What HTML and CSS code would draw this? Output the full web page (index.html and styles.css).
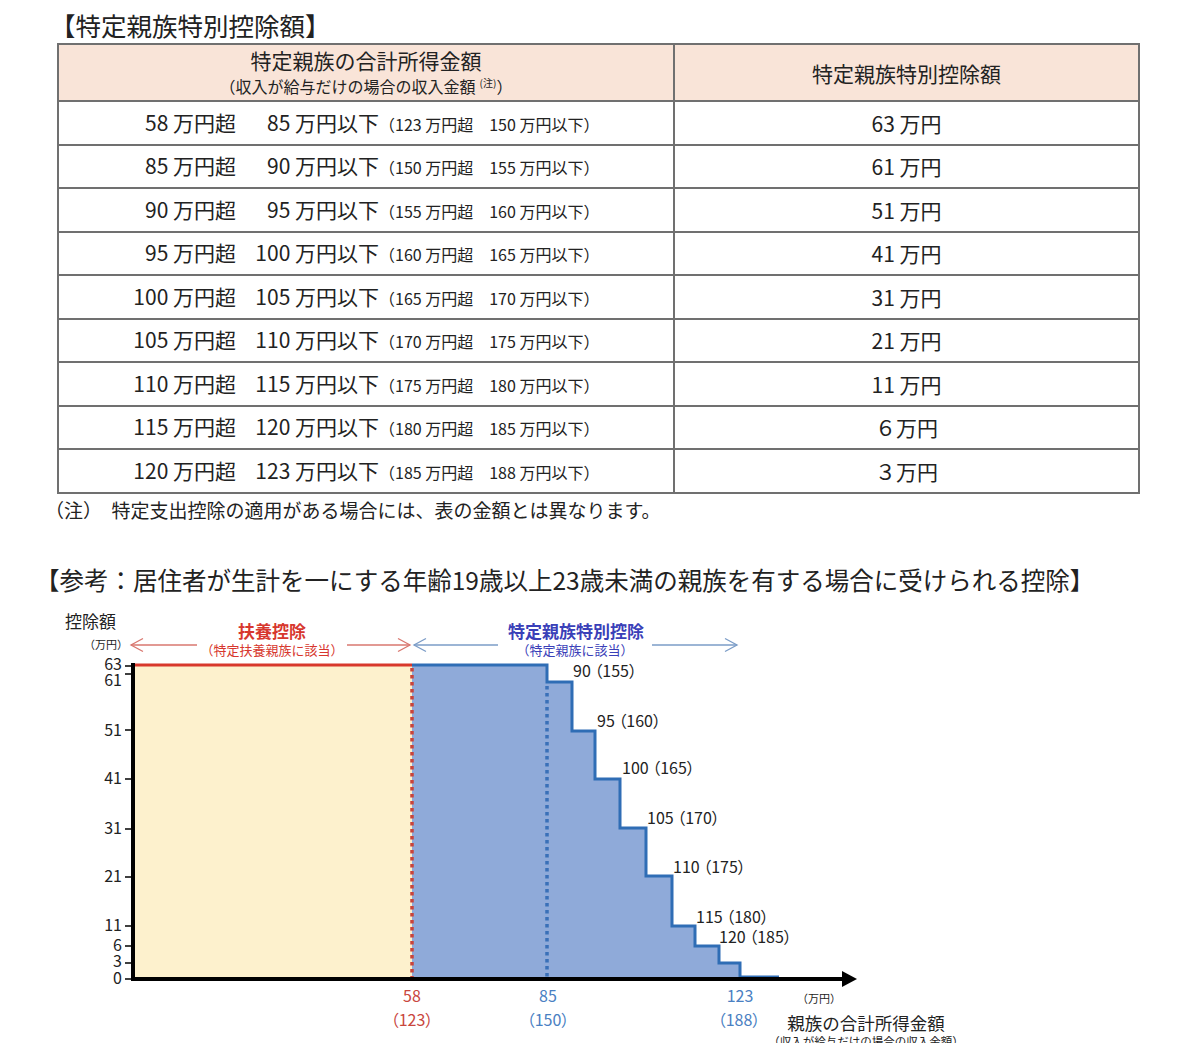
FILE: index.html
```html
<!DOCTYPE html>
<html lang="ja">
<head>
<meta charset="utf-8">
<title>特定親族特別控除額</title>
<link rel="stylesheet" href="styles.css">
</head>
<body>
<div class="page">
  <h2 class="title">【特定親族特別控除額】</h2>
  <table class="deduct">
    <colgroup><col class="c-income"><col class="c-amount"></colgroup>
    <thead>
      <tr>
        <th class="th-income">
          <div class="th-main">特定親族の合計所得金額</div>
          <div class="th-sub">（収入が給与だけの場合の収入金額<sup class="mark">(注)</sup>）</div>
        </th>
        <th class="th-amount">特定親族特別控除額</th>
      </tr>
    </thead>
    <tbody>
      <tr><td><div class="range"><span class="from">58 万円超</span><span class="to">85 万円以下</span><span class="salary">（123 万円超　150 万円以下）</span></div></td><td class="amount">63 万円</td></tr>
      <tr><td><div class="range"><span class="from">85 万円超</span><span class="to">90 万円以下</span><span class="salary">（150 万円超　155 万円以下）</span></div></td><td class="amount">61 万円</td></tr>
      <tr><td><div class="range"><span class="from">90 万円超</span><span class="to">95 万円以下</span><span class="salary">（155 万円超　160 万円以下）</span></div></td><td class="amount">51 万円</td></tr>
      <tr><td><div class="range"><span class="from">95 万円超</span><span class="to">100 万円以下</span><span class="salary">（160 万円超　165 万円以下）</span></div></td><td class="amount">41 万円</td></tr>
      <tr><td><div class="range"><span class="from">100 万円超</span><span class="to">105 万円以下</span><span class="salary">（165 万円超　170 万円以下）</span></div></td><td class="amount">31 万円</td></tr>
      <tr><td><div class="range"><span class="from">105 万円超</span><span class="to">110 万円以下</span><span class="salary">（170 万円超　175 万円以下）</span></div></td><td class="amount">21 万円</td></tr>
      <tr><td><div class="range"><span class="from">110 万円超</span><span class="to">115 万円以下</span><span class="salary">（175 万円超　180 万円以下）</span></div></td><td class="amount">11 万円</td></tr>
      <tr><td><div class="range"><span class="from">115 万円超</span><span class="to">120 万円以下</span><span class="salary">（180 万円超　185 万円以下）</span></div></td><td class="amount">６万円</td></tr>
      <tr><td><div class="range"><span class="from">120 万円超</span><span class="to">123 万円以下</span><span class="salary">（185 万円超　188 万円以下）</span></div></td><td class="amount">３万円</td></tr>
    </tbody>
  </table>
  <p class="note">（注）　特定支出控除の適用がある場合には、表の金額とは異なります。</p>

  <h2 class="ref">【参考：居住者が生計を一にする年齢19歳以上23歳未満の親族を有する場合に受けられる控除】</h2>

  <svg class="chart" viewBox="0 594 1200 449" width="1200" height="449" xmlns="http://www.w3.org/2000/svg">
    <!-- areas -->
    <rect x="133" y="663" width="279" height="314" fill="#fdf1cd"/>
    <polygon fill="#8faad9" points="412,663 547,663 547,680 572,680 572,729 595,729 595,777 620,777 620,826 646,826 646,874 672,874 672,924 695,924 695,944 719,944 719,961 740,961 740,977 412,977"/>
    <!-- dotted boundaries -->
    <line x1="412" y1="666" x2="412" y2="976" stroke="#c9443b" stroke-width="3.5" stroke-dasharray="3.5 3.5"/>
    <line x1="547" y1="684" x2="547" y2="976" stroke="#3a70b8" stroke-width="3.5" stroke-dasharray="3.5 3.5"/>
    <!-- step outline -->
    <polyline fill="none" stroke="#2f6db5" stroke-width="3" points="412,663 547,663 547,680 572,680 572,729 595,729 595,777 620,777 620,826 646,826 646,874 672,874 672,924 695,924 695,944 719,944 719,961 740,961 740,975 779,975"/>
    <line x1="133" y1="663" x2="412" y2="663" stroke="#d8392c" stroke-width="3"/>

    <!-- axes -->
    <line x1="133" y1="661" x2="133" y2="979" stroke="#000" stroke-width="4"/>
    <line x1="131" y1="977" x2="844" y2="977" stroke="#000" stroke-width="4"/>
    <polygon points="842,969 857,977 842,985" fill="#000"/>
    <g stroke="#000" stroke-width="1.5">
      <line x1="125" y1="664" x2="133" y2="664"/>
      <line x1="125" y1="672" x2="133" y2="672"/>
      <line x1="125" y1="728" x2="133" y2="728"/>
      <line x1="125" y1="777" x2="133" y2="777"/>
      <line x1="125" y1="827" x2="133" y2="827"/>
      <line x1="125" y1="875" x2="133" y2="875"/>
      <line x1="125" y1="924" x2="133" y2="924"/>
      <line x1="125" y1="944" x2="133" y2="944"/>
      <line x1="125" y1="961" x2="133" y2="961"/>
      <line x1="125" y1="977" x2="133" y2="977"/>
    </g>

    <!-- y labels -->
    <text class="c-lbl" x="65" y="626">控除額</text>
    <text class="c-unit" x="84" y="647">（万円）</text>
    <g class="c-num" text-anchor="end">
      <text x="122" y="667.5">63</text>
      <text x="122" y="684">61</text>
      <text x="122" y="733.5">51</text>
      <text x="122" y="781.5">41</text>
      <text x="122" y="831.5">31</text>
      <text x="122" y="879.5">21</text>
      <text x="122" y="928.5">11</text>
      <text x="122" y="948.5">6</text>
      <text x="122" y="965">3</text>
      <text x="122" y="981.5">0</text>
    </g>

    <!-- range arrows -->
    <g fill="none" stroke="#d9776f" stroke-width="1.3">
      <line x1="131" y1="643" x2="197" y2="643"/>
      <line x1="347" y1="643" x2="410" y2="643"/>
      <polyline points="143,636.5 131,643 143,649.5"/>
      <polyline points="398,636.5 410,643 398,649.5"/>
    </g>
    <g fill="none" stroke="#7b9cc7" stroke-width="1.3">
      <line x1="414" y1="643" x2="498" y2="643"/>
      <line x1="652" y1="643" x2="737" y2="643"/>
      <polyline points="426,636.5 414,643 426,649.5"/>
      <polyline points="725,636.5 737,643 725,649.5"/>
    </g>
    <text class="c-head c-red" x="272" y="635.5" text-anchor="middle">扶養控除</text>
    <text class="c-sub c-red" x="272" y="652.5" text-anchor="middle">（特定扶養親族に該当）</text>
    <text class="c-head c-indigo" x="576" y="635.5" text-anchor="middle">特定親族特別控除</text>
    <text class="c-sub c-indigo" x="575" y="653" text-anchor="middle">（特定親族に該当）</text>

    <!-- step labels -->
    <g class="c-num c-palt">
      <text x="573" y="674.5">90 （155）</text>
      <text x="597" y="724.5">95 （160）</text>
      <text x="622" y="771.5">100 （165）</text>
      <text x="647" y="821.5">105 （170）</text>
      <text x="673" y="870.5">110 （175）</text>
      <text x="696" y="920.5">115 （180）</text>
      <text x="719" y="940.5">120 （185）</text>
    </g>

    <!-- x labels -->
    <g class="c-num c-palt" text-anchor="middle">
      <text class="x-red" x="412" y="1000">58</text>
      <text class="x-red" x="412" y="1024">（123）</text>
      <text class="x-blue" x="548" y="1000">85</text>
      <text class="x-blue" x="548" y="1024">（150）</text>
      <text class="x-blue" x="740" y="1000">123</text>
      <text class="x-blue" x="739" y="1024">（188）</text>
    </g>
    <text class="c-unit" x="819" y="1000.5" text-anchor="middle">（万円）</text>
    <text class="c-axis" x="866" y="1028" text-anchor="middle">親族の合計所得金額</text>
    <text class="c-axis-sub" x="866" y="1044" text-anchor="middle">（収入が給与だけの場合の収入金額）</text>
  </svg>
</div>
</body>
</html>
```

FILE: styles.css
```css
* {
  box-sizing: border-box;
}

body {
  margin: 0;
  background: #ffffff;
  color: #222222;
  font-family: "Noto Sans CJK JP", "Noto Sans", sans-serif;
}

.page {
  width: 1200px;
  height: 1043px;
  overflow: hidden;
}

.title {
  margin: 10px 0 3px 50px;
  font-size: 25.5px;
  font-weight: 400;
  line-height: 30px;
  white-space: nowrap;
}

.deduct {
  margin-left: 57px;
  width: 1083px;
  border-collapse: collapse;
  table-layout: fixed;
}

.c-income {
  width: 616px;
}

.deduct th,
.deduct td {
  border: 2px solid #707070;
  padding: 0;
  vertical-align: middle;
}

.deduct thead tr {
  height: 57px;
}

.deduct tbody tr {
  height: 43.5px;
}

.deduct th {
  background: #f9e4d8;
  font-weight: 400;
  text-align: center;
}

.th-income {
  padding-top: 4px;
}

.th-main {
  font-size: 21px;
  line-height: 26px;
}

.th-sub {
  font-size: 16px;
  line-height: 26px;
}

.mark {
  font-size: 10px;
  vertical-align: 6px;
  line-height: 0;
  margin-left: 4px;
}

.th-amount {
  font-size: 21px;
}

.deduct td {
  font-size: 21px;
  line-height: 28px;
}

.range {
  display: grid;
  grid-template-columns: 177px 143px auto;
  align-items: baseline;
}

.from,
.to {
  text-align: right;
  white-space: nowrap;
}

.salary {
  font-size: 16px;
  white-space: nowrap;
}

.amount {
  text-align: center;
}

.note {
  margin: 3px 0 0 45px;
  font-size: 19px;
  line-height: 26px;
}

.ref {
  margin: 41px 0 0 35px;
  font-size: 24.5px;
  font-weight: 400;
  line-height: 32px;
  white-space: nowrap;
}

.chart {
  display: block;
}

.chart text {
  font-family: "Noto Sans CJK JP", "Noto Sans", sans-serif;
  fill: #222222;
}

.chart .c-lbl {
  font-size: 17px;
}

.chart .c-unit {
  font-size: 11px;
}

.chart .c-num {
  font-size: 16px;
}

.chart .c-palt text {
  font-feature-settings: "palt";
}

.chart .c-head {
  font-size: 17px;
  font-weight: 700;
}

.chart .c-sub {
  font-size: 13px;
}

.chart .c-red {
  fill: #d7372e;
}

.chart .c-indigo {
  fill: #3a40b8;
}

.chart .x-red {
  fill: #c9463d;
}

.chart .x-blue {
  fill: #4a80c2;
}

.chart .c-axis {
  font-size: 17.5px;
}

.chart .c-axis-sub {
  font-size: 11.5px;
}
```
